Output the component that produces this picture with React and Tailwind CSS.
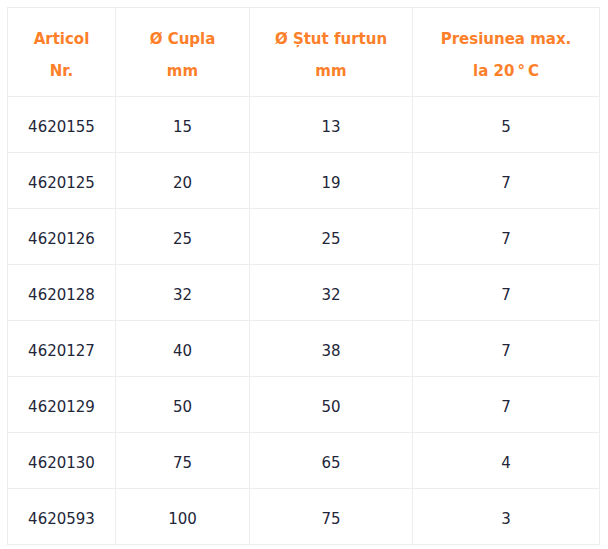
import React from "react";

const rows = [
  ["4620155", "15", "13", "5"],
  ["4620125", "20", "19", "7"],
  ["4620126", "25", "25", "7"],
  ["4620128", "32", "32", "7"],
  ["4620127", "40", "38", "7"],
  ["4620129", "50", "50", "7"],
  ["4620130", "75", "65", "4"],
  ["4620593", "100", "75", "3"],
];

const headers = [
  ["Articol", "Nr."],
  ["Ø Cupla", "mm"],
  ["Ø Ștut furtun", "mm"],
  ["Presiunea max.", "la 20\u2009°\u2009C"],
];

export default function App() {
  return (
    <div className="w-[608px] h-[549px] bg-white pt-[7px] pl-[7px]" style={{ fontFamily: '"DejaVu Sans", sans-serif' }}>
      <table className="table-fixed border-collapse w-[592px] text-[15px]">
        <colgroup>
          <col className="w-[108px]" />
          <col className="w-[134px]" />
          <col className="w-[163px]" />
          <col className="w-[187px]" />
        </colgroup>
        <thead>
          <tr className="h-[89px]">
            {headers.map((h, i) => (
              <th key={i} className="border border-[#ededed] p-0 pt-[6px] text-center font-bold text-[#fd7f2a] leading-[32px] align-middle">
                <div>{h[0]}</div>
                <div>{h[1]}</div>
              </th>
            ))}
          </tr>
        </thead>
        <tbody>
          {rows.map((r, i) => (
            <tr key={i} className="h-[56px]">
              {r.map((c, j) => (
                <td key={j} className="border border-[#ededed] p-0 pt-[6px] text-center text-[#1e2638] align-middle">
                  {c}
                </td>
              ))}
            </tr>
          ))}
        </tbody>
      </table>
    </div>
  );
}
